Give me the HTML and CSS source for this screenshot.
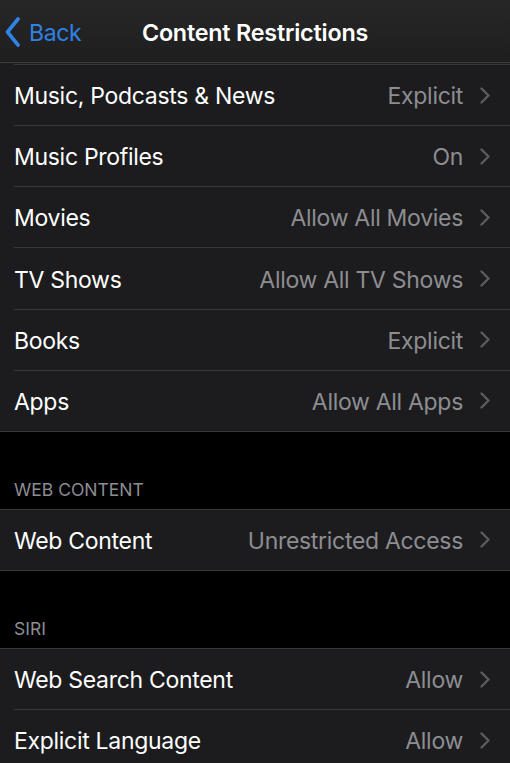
FILE: index.html
```html
<!DOCTYPE html>
<html lang="en">

<head>
  <meta charset="UTF-8" />
  <meta name="viewport" content="width=device-width, initial-scale=1.0" />
  <title>Content Restrictions</title>
  <link rel="stylesheet" href="styles.css">
</head>

<body>

  <header class="navbar">
    <a class="back" href="#">
      <svg class="back-icon" width="18" height="30" viewBox="0 0 18 30">
        <polyline points="14,2 3.5,15 14,28" />
      </svg>
      <span>Back</span>
    </a>
    <h1 class="title">Content Restrictions</h1>
  </header>

  <ul class="group group-first">
    <li class="row"><span class="label">Music, Podcasts &amp; News</span><span class="value">Explicit</span><svg class="chev" viewBox="0 0 10 17"><polyline points="1.5,1.5 8.5,8.5 1.5,15.5" /></svg></li>
    <li class="row"><span class="label">Music Profiles</span><span class="value">On</span><svg class="chev" viewBox="0 0 10 17"><polyline points="1.5,1.5 8.5,8.5 1.5,15.5" /></svg></li>
    <li class="row"><span class="label">Movies</span><span class="value">Allow All Movies</span><svg class="chev" viewBox="0 0 10 17"><polyline points="1.5,1.5 8.5,8.5 1.5,15.5" /></svg></li>
    <li class="row"><span class="label">TV Shows</span><span class="value">Allow All TV Shows</span><svg class="chev" viewBox="0 0 10 17"><polyline points="1.5,1.5 8.5,8.5 1.5,15.5" /></svg></li>
    <li class="row"><span class="label">Books</span><span class="value">Explicit</span><svg class="chev" viewBox="0 0 10 17"><polyline points="1.5,1.5 8.5,8.5 1.5,15.5" /></svg></li>
    <li class="row"><span class="label">Apps</span><span class="value">Allow All Apps</span><svg class="chev" viewBox="0 0 10 17"><polyline points="1.5,1.5 8.5,8.5 1.5,15.5" /></svg></li>
  </ul>

  <h2 class="section-head">WEB CONTENT</h2>
  <ul class="group">
    <li class="row"><span class="label">Web Content</span><span class="value">Unrestricted Access</span><svg class="chev" viewBox="0 0 10 17"><polyline points="1.5,1.5 8.5,8.5 1.5,15.5" /></svg></li>
  </ul>

  <h2 class="section-head">SIRI</h2>
  <ul class="group">
    <li class="row"><span class="label">Web Search Content</span><span class="value">Allow</span><svg class="chev" viewBox="0 0 10 17"><polyline points="1.5,1.5 8.5,8.5 1.5,15.5" /></svg></li>
    <li class="row"><span class="label">Explicit Language</span><span class="value">Allow</span><svg class="chev" viewBox="0 0 10 17"><polyline points="1.5,1.5 8.5,8.5 1.5,15.5" /></svg></li>
  </ul>

</body>

</html>
```

FILE: styles.css
```css
body {
  margin: 0;
  background: #000;
  font-family: Inter, "Noto Sans", sans-serif;
  color: #fff;
  overflow: hidden;
}

.navbar {
  height: 63px;
  box-sizing: border-box;
  padding-top: 2px;
  display: flex;
  align-items: center;
  justify-content: center;
  position: relative;
  background: linear-gradient(#272728, #1e1e1f);
  border-bottom: 1px solid #3b3b3d;
}
.back {
  position: absolute;
  left: 4px;
  top: 17px;
  display: flex;
  align-items: center;
  gap: 7px;
  color: #2f82e6;
  text-decoration: none;
  font-size: 23px;
  letter-spacing: -0.4px;
}
.back span {
  padding-top: 2px;
}
.back-icon polyline {
  fill: none;
  stroke: #2f82e6;
  stroke-width: 3.6;
  stroke-linecap: round;
  stroke-linejoin: round;
}
.title {
  margin: 0;
  font-size: 23.3px;
  font-weight: 600;
  letter-spacing: -0.2px;
}

.group {
  list-style: none;
  margin: 0;
  padding: 0;
  background: #1c1c1e;
  border-top: 1px solid #38383a;
  border-bottom: 1px solid #38383a;
}
.group-first {
  border-top: none;
  padding-top: 1px;
}
.group-first::before {
  content: "";
  display: block;
  margin-left: 14px;
  border-bottom: 1px solid #38383a;
}
.row {
  height: 60.3px;
  box-sizing: border-box;
  padding-top: 2px;
  display: flex;
  align-items: center;
  margin-left: 14px;
  padding-right: 20px;
  font-size: 23px;
  letter-spacing: -0.3px;
}
.row + .row {
  border-top: 1px solid #38383a;
  height: 61.1px;
}
.label {
  flex: 1;
}
.value {
  color: #8d8d92;
  margin-right: 17px;
}
.chev {
  width: 10px;
  height: 17px;
  margin-bottom: 2px;
}
.chev polyline {
  fill: none;
  stroke: #5c5c60;
  stroke-width: 2.4;
  stroke-linecap: round;
  stroke-linejoin: round;
}

.section-head {
  margin: 0;
  height: 77px;
  box-sizing: border-box;
  display: flex;
  align-items: flex-end;
  padding: 0 0 9px 14px;
  font-size: 17.5px;
  font-weight: 400;
  color: #8d8d92;
}
```
